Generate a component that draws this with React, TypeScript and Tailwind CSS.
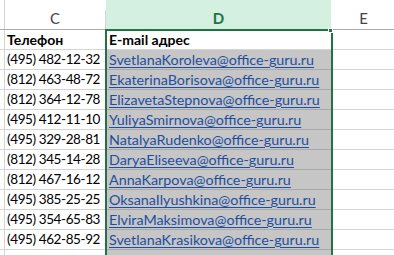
import React from "react";

const rows: [string, string][] = [
  ["(495) 482-12-32", "SvetlanaKoroleva@office-guru.ru"],
  ["(812) 463-48-72", "EkaterinaBorisova@office-guru.ru"],
  ["(812) 364-12-78", "ElizavetaStepnova@office-guru.ru"],
  ["(495) 412-11-10", "YuliyaSmirnova@office-guru.ru"],
  ["(495) 329-28-81", "NatalyaRudenko@office-guru.ru"],
  ["(812) 345-14-28", "DaryaEliseeva@office-guru.ru"],
  ["(812) 467-16-12", "AnnaKarpova@office-guru.ru"],
  ["(495) 385-25-25", "OksanaIlyushkina@office-guru.ru"],
  ["(495) 354-65-83", "ElviraMaksimova@office-guru.ru"],
  ["(495) 462-85-92", "SvetlanaKrasikova@office-guru.ru"],
  ["", ""],
];

export default function App() {
  return (
    <div
      className="relative w-[394px] h-[255px] overflow-hidden bg-white text-black"
      style={{ fontFamily: "Lato, 'Noto Sans', sans-serif" }}
    >
      <div className="h-[10px] flex">
        <div className="w-[5px] border-r border-[#d4d4d4]" />
        <div className="w-[101px]" />
        <div className="w-[225px] bg-[#d3f0e0]" />
        <div className="flex-1" />
      </div>
      {/* column headers */}
      <div className="flex h-[20px] border-b border-[#ababab]">
        <div className="w-[5px] border-r border-[#d4d4d4]" />
        <div className="w-[101px] border-r border-[#d4d4d4] flex items-start justify-center text-[15px] leading-[16px] text-[#444]">
          C
        </div>
        <div className="w-[225px] bg-[#d3f0e0] flex items-start justify-center text-[15px] leading-[16px] font-bold text-[#217346]">
          D
        </div>
        <div className="flex-1 flex items-start justify-center text-[15px] leading-[16px] text-[#444] pl-[2px]">
          E
        </div>
      </div>
      {/* header row */}
      <div className="flex h-[20px] border-b border-[#d4d4d4]">
        <div className="w-[5px] border-r border-[#d4d4d4]" />
        <div className="w-[101px] border-r border-[#d4d4d4] pl-[2px] text-[14px] leading-[20px] font-bold">
          Телефон
        </div>
        <div className="w-[225px] pl-[3px] text-[14px] leading-[20px] font-bold">
          E-mail адрес
        </div>
        <div className="flex-1" />
      </div>
      {rows.map(([phone, mail], i) => (
        <div key={i} className="flex h-[20px]">
          <div className="w-[5px] border-r border-b border-[#d4d4d4]" />
          <div className="w-[101px] border-r border-b border-[#d4d4d4] pl-[2px] text-[13.5px] tracking-[-0.4px] leading-[19px] whitespace-nowrap">
            {phone}
          </div>
          <div className="w-[225px] bg-[#c6c6c6] border-b border-[#a9a9a9] pl-[3px] text-[14.3px] leading-[19px] whitespace-nowrap">
            <span className="text-[#1f4ea0] underline underline-offset-[2px]">{mail}</span>
          </div>
          <div className="flex-1 border-b border-[#d4d4d4]" />
        </div>
      ))}
      {/* selection overlay */}
      <div className="absolute left-[105px] top-[29px] w-[228px] h-[240px] border-2 border-[#217346] pointer-events-none" />
      <div className="absolute left-[328px] top-[28px] w-[5px] h-[5px] bg-[#217346] border border-white" />
    </div>
  );
}
